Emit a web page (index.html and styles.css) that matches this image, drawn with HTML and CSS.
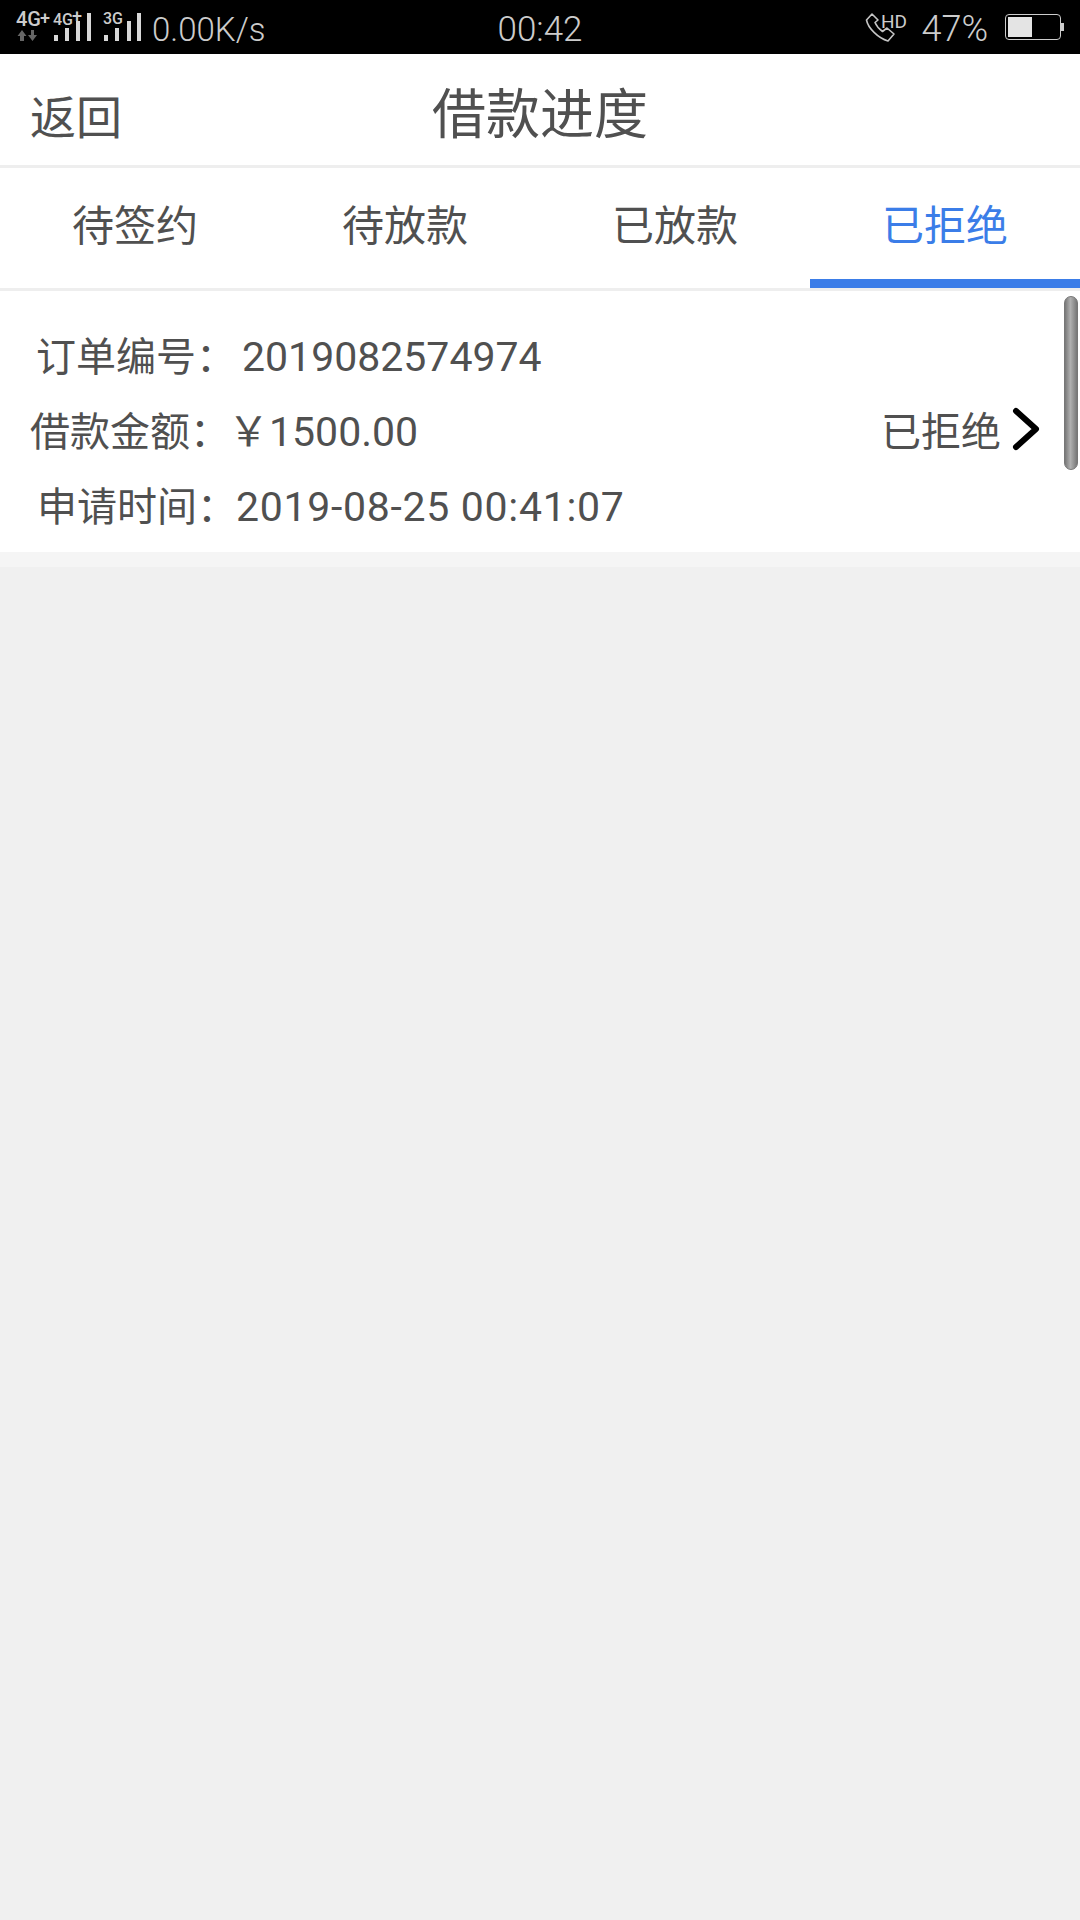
FILE: index.html
```html
<!DOCTYPE html>
<html lang="zh-CN">
<head>
  <meta charset="UTF-8">
  <title>借款进度</title>
  <link rel="stylesheet" href="styles.css">
</head>
<body>
  <!-- Status bar -->
  <div class="status-bar">
    <div class="status-left">
      <svg class="signal" width="140" height="54" viewBox="0 0 140 54">
        <text x="0" y="26" class="net-big">4G</text>
        <text x="24" y="24" class="net-plus">+</text>
        <path class="arrow" d="M4 41v-5H1.500L6 30l4.500 6H8v5zM15 30v5h-3l4.500 6 4.500-6h-3v-5z"/>
        <text x="37" y="25" class="net-small">4G</text>
        <text x="56" y="22" class="net-plus">+</text>
        <path class="bar" d="M38 35h4v6h-4zM49 28h4v13h-4zM60 21h4v20h-4zM71 13h4v28h-4z"/>
        <text x="87" y="24" class="net-small">3G</text>
        <path class="bar" d="M88 35h4v6h-4zM99 28h4v13h-4zM111 21h4v20h-4zM121 13h4v28h-4z"/>
      </svg>
      <span class="speed">0.00K/s</span>
    </div>
    <div class="status-time">00:42</div>
    <div class="status-right">
      <svg class="call" width="46" height="40" viewBox="0 -4 46 40">
        <path class="call-line" d="M7 3 1.500 9C3 17 13 27 23 30l6-7-7-6-4.500 3.500C14 18 11.500 15 10 11.500L13 9z"/>
        <text x="16" y="17" class="hd">HD</text>
      </svg>
      <span class="battery-pct">47%</span>
      <div class="battery">
        <div class="battery-fill" style="width: 47%"></div>
      </div>
      <div class="battery-tip"></div>
    </div>
  </div>

  <!-- Title -->
  <header class="top-bar">
    <a class="back">返回</a>
    <h1>借款进度</h1>
  </header>

  <!-- Tabs -->
  <nav class="tabs">
    <div class="tab">待签约</div>
    <div class="tab">待放款</div>
    <div class="tab">已放款</div>
    <div class="tab active">已拒绝</div>
  </nav>

  <!-- Order -->
  <section class="order">
    <div class="order-info">
      <div class="row row-no"><span class="label">订单编号：</span><span class="value">2019082574974</span></div>
      <div class="row row-amount"><span class="label">借款金额：</span><span class="value">￥1500.00</span></div>
      <div class="row row-time"><span class="label">申请时间：</span><span class="value">2019-08-25 00:41:07</span></div>
    </div>
    <div class="order-state">
      <span>已拒绝</span>
      <svg width="28" height="44" viewBox="0 0 28 44">
        <path class="chevron" d="M4 4 24 22 4 40"/>
      </svg>
    </div>
    <div class="scroll-thumb"></div>
  </section>
  <div class="order-gap"></div>
</body>
</html>
```

FILE: styles.css
```css
* {
  box-sizing: border-box;
}
html, body {
  height: 100%;
}
body {
  margin: 0;
  background-color: #f0f0f0;
  color: #505050;
  font-family: Roboto, "Noto Sans CJK SC", sans-serif;
}

/* status bar */
.status-bar {
  display: grid;
  grid-template-columns: 1fr auto 1fr;
  align-items: center;
  height: 54px;
  padding-top: 4px;
  background-color: #000;
  color: #ccc;
  font-size: 33px;
}
.status-left {
  display: flex;
  align-items: center;
  margin-top: -4px;
  padding-left: 16px;
}
.signal {
  flex: none;
}
.speed {
  margin-left: -4px;
  padding-top: 4px;
  font-weight: 300;
}
.net-big {
  font: 500 20px Roboto, sans-serif;
  fill: #ccc;
}
.net-plus {
  font: 500 18px Roboto, sans-serif;
  fill: #ccc;
}
.net-small {
  font: 500 16px Roboto, sans-serif;
  fill: #ccc;
}
.arrow {
  fill: #666;
}
.bar {
  fill: #d8d8d8;
}
.status-time {
  font-size: 35px;
  font-weight: 300;
}
.status-right {
  display: flex;
  align-items: center;
  justify-content: flex-end;
  margin-top: -4px;
  padding-right: 16px;
}
.call {
  flex: none;
}
.call-line {
  fill: none;
  stroke: #c4c4c4;
  stroke-width: 1.6;
  stroke-linejoin: round;
}
.hd {
  font: 400 19px Roboto, sans-serif;
  fill: #ccc;
}
.battery-pct {
  margin-left: 10px;
  padding-top: 4px;
  font-size: 36px;
  font-weight: 300;
}
.battery {
  width: 56px;
  height: 26px;
  margin-left: 17px;
  padding: 2px;
  border: 1.5px solid #ccc;
  border-radius: 4px;
}
.battery-fill {
  height: 100%;
  background-color: #e4e4e4;
}
.battery-tip {
  width: 3px;
  height: 8px;
  background-color: #ccc;
}

/* title */
.top-bar {
  display: flex;
  align-items: center;
  justify-content: center;
  position: relative;
  height: 114px;
  padding-top: 2px;
  background-color: #fff;
  border-bottom: 3px solid #eee;
}
.top-bar h1 {
  margin: 0;
  font-size: 54px;
  font-weight: 400;
}
.back {
  position: absolute;
  left: 30px;
  margin-top: 7px;
  font-size: 46px;
}

/* tabs */
.tabs {
  display: grid;
  grid-template-columns: repeat(4, 1fr);
  height: 123px;
  background-color: #fff;
  border-bottom: 3px solid #eee;
}
.tab {
  display: flex;
  align-items: center;
  justify-content: center;
  padding-bottom: 2px;
  font-size: 42px;
  border-bottom: 9px solid transparent;
}
.tab.active {
  color: #3b7de8;
  border-bottom-color: #3b7de8;
}

/* order */
.order {
  display: flex;
  align-items: center;
  justify-content: space-between;
  position: relative;
  height: 261px;
  padding: 29px 40px 7px 0;
  background-color: #fff;
}
.row {
  display: flex;
  align-items: baseline;
  height: 75px;
  line-height: 75px;
  font-size: 40px;
}
.value {
  font-size: 41px;
}
.row-no {
  padding-left: 36px;
}
.row-no .value {
  margin-left: 6px;
}
.row-amount {
  padding-left: 30px;
}
.row-amount .value {
  margin-left: -2px;
}
.row-time {
  padding-left: 37px;
}
.row-time .value {
  margin-left: -1px;
  letter-spacing: 0.7px;
}
.order-state {
  display: flex;
  align-items: center;
  gap: 11px;
  margin-top: -8px;
  font-size: 40px;
}
.chevron {
  fill: none;
  stroke: #000;
  stroke-width: 6;
  stroke-linecap: round;
  stroke-linejoin: round;
}
.scroll-thumb {
  position: absolute;
  top: 5px;
  right: 2px;
  width: 14px;
  height: 174px;
  border: 1px solid #777;
  border-radius: 7px;
  background: linear-gradient(to right, #777, #b0b0b0 45%, #777);
}
.order-gap {
  height: 15px;
  background-color: #f5f5f5;
}
```
